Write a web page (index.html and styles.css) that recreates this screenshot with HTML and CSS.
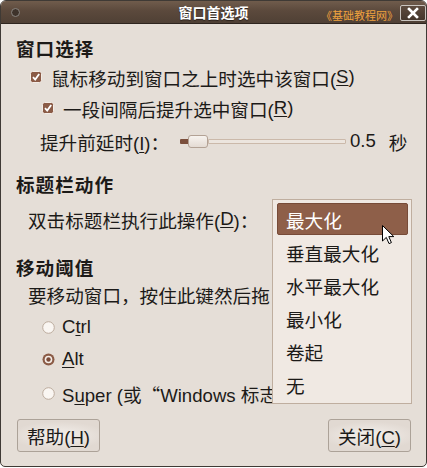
FILE: index.html
```html
<!DOCTYPE html>
<html lang="zh-CN">
    <head>
        <meta charset="UTF-8">
        <title>窗口首选项</title>
        <link rel="stylesheet" href="styles.css">
    </head>
    <body>
        <div class="window">
            <div class="titlebar">
                <div class="tb-left"><span class="menu-dot"></span></div>
                <div class="title">窗口首选项</div>
                <div class="tb-right">
                    <span class="brand">《基础教程网》</span>
                    <span class="close">
                        <svg viewBox="0 0 12 12" width="12" height="12">
                            <path d="M2 2 L10 10 M10 2 L2 10" stroke="#fff" stroke-width="2.6" stroke-linecap="square"></path>
                        </svg>
                    </span>
                </div>
            </div>

            <div class="content">
                <div class="heading heading-first">窗口选择</div>
                <label class="row check-row row-s1">
                    <span class="check"><svg viewBox="0 0 12 12"><rect x="0.5" y="0.5" width="11" height="11" rx="2" fill="#8b5b46" stroke="#f3ece6"></rect><path d="M3 6.2 L5.2 8.6 L9.2 3" fill="none" stroke="#fff" stroke-width="1.8"></path></svg></span>
                    鼠标移动到窗口之上时选中该窗口(<u>S</u>)
                </label>
                <label class="row check-row check-sub row-s2">
                    <span class="check"><svg viewBox="0 0 12 12"><rect x="0.5" y="0.5" width="11" height="11" rx="2" fill="#8b5b46" stroke="#f3ece6"></rect><path d="M3 6.2 L5.2 8.6 L9.2 3" fill="none" stroke="#fff" stroke-width="1.8"></path></svg></span>
                    一段间隔后提升选中窗口(<u>R</u>)
                </label>
                <div class="row slider-row row-s3">
                    <span class="slider-label">提升前延时(<u>I</u>)：</span>
                    <div class="slider">
                        <span class="slider-fill"></span>
                        <span class="slider-thumb"></span>
                        <span class="slider-rest"></span>
                    </div>
                    <span class="slider-value">0.5</span>
                    <span class="slider-unit">秒</span>
                </div>

                <div class="heading heading-2">标题栏动作</div>
                <div class="row plain-row row-combo">双击标题栏执行此操作(<u>D</u>)：</div>

                <div class="heading heading-3">移动阈值</div>
                <div class="row plain-row"><span class="clip clip-plain">要移动窗口，按住此键然后拖</span></div>
                <label class="row radio-row row-r1">
                    <span class="radio"><svg viewBox="0 0 13 13"><circle cx="6.5" cy="6.5" r="5.8" fill="#faf6f2" stroke="#bcac9e"></circle></svg></span>
                    C<u>t</u>rl
                </label>
                <label class="row radio-row row-r2">
                    <span class="radio"><svg viewBox="0 0 13 13"><circle cx="6.5" cy="6.5" r="6" fill="#8b5b46"></circle><circle cx="6.5" cy="6.5" r="3.8" fill="#f6efe9"></circle><circle cx="6.5" cy="6.5" r="2.2" fill="#7a4b38"></circle></svg></span>
                    <u>A</u>lt
                </label>
                <label class="row radio-row row-r3">
                    <span class="radio"><svg viewBox="0 0 13 13"><circle cx="6.5" cy="6.5" r="5.8" fill="#faf6f2" stroke="#bcac9e"></circle></svg></span>
                    <span class="clip clip-super">S<u>u</u>per (或<span class="cjk">“</span>Windows 标志</span>
                </label>

                <div class="buttons">
                    <button class="btn">帮助(<u>H</u>)</button>
                    <button class="btn">关闭(<u>C</u>)</button>
                </div>
            </div>

            <ul class="popup">
                <li class="selected">最大化</li>
                <li>垂直最大化</li>
                <li>水平最大化</li>
                <li>最小化</li>
                <li>卷起</li>
                <li>无</li>
            </ul>

            <svg class="cursor" viewBox="0 0 13 20" width="13" height="20">
                <path d="M0.5 0.5 L0.5 16 L4.3 12.4 L7 18.6 L9.4 17.6 L6.8 11.6 L11.8 11.6 Z" fill="#fff" stroke="#000" stroke-width="1"></path>
            </svg>
        </div>
    </body>
</html>
```

FILE: styles.css
```css
* {
    padding: 0;
    margin: 0;
    box-sizing: border-box
}

body {
    background: #fff;
    font-family: "Liberation Sans", "Noto Sans CJK SC", sans-serif;
    font-size: 18.6px;
    color: #1c1a18
}

u {
    text-decoration-thickness: 1px;
    text-underline-offset: 2px
}

.cjk {
    font-family: "Noto Sans CJK SC", sans-serif
}

.window {
    position: relative;
    width: 427px;
    height: 467px;
    background: #e5ded7;
    border: 1px solid #3f3a35;
    border-radius: 6px 6px 5px 5px;
    overflow: hidden
}

.titlebar {
    height: 23px;
    display: grid;
    grid-template-columns: 1fr auto 1fr;
    align-items: center;
    background: linear-gradient(#705c4c, #5b493c 45%, #4f4035);
    border-bottom: 1px solid #2e251f
}

.tb-left {
    display: flex;
    padding-left: 10px
}

.menu-dot {
    width: 9px;
    height: 9px;
    border-radius: 50%;
    border: 1px solid #8a8580;
    background: #3e332b
}

.title {
    color: #fff;
    font-weight: 700;
    font-size: 14px;
    text-shadow: 0 1px 1px #2a211b
}

.tb-right {
    display: flex;
    justify-content: flex-end;
    align-items: center;
    gap: 2px
}

.brand {
    color: #f0a23e;
    font-size: 11px;
    margin-top: 5px
}

.close {
    width: 26px;
    height: 16px;
    display: flex;
    justify-content: center;
    align-items: center;
    border: 1px solid #c9c4bf;
    border-radius: 2px;
    background: linear-gradient(#5d4b3e, #45372d);
    margin-top: 2px
}

.content {
    padding: 0 15px
}

.heading {
    height: 26px;
    display: flex;
    align-items: center;
    font-weight: 700;
    letter-spacing: 1px
}

.heading-first {
    margin-top: 10px
}

.heading-2 {
    margin-top: 14px
}

.heading-3 {
    margin-top: 19px
}

.row {
    height: 30px;
    display: flex;
    align-items: center;
    white-space: nowrap
}

.row-s1 {
    margin-top: 2px
}

.row-s2 {
    margin-top: 1px
}

.row-s3 {
    margin-top: 3px
}

.row-combo {
    margin-top: 8px
}

.row-r1 {
    margin-top: 3px
}

.row-r2 {
    margin-top: 2px
}

.row-r3 {
    margin-top: 4px
}

.clip {
    overflow: hidden;
    white-space: nowrap
}

.clip-plain {
    max-width: 244px
}

.clip-super {
    max-width: 210px
}

.check-row {
    padding-left: 14px
}

.check-sub {
    padding-left: 26px
}

.check {
    width: 12px;
    height: 12px;
    margin-right: 9px;
    display: flex
}

.check svg,
.radio svg {
    width: 100%;
    height: 100%
}

.slider-row {
    padding-left: 24px
}

.slider-label {
    width: 140px
}

.slider {
    width: 166px;
    display: flex;
    align-items: center
}

.slider-fill {
    width: 8px;
    height: 5px;
    background: #7b4f3c;
    border-radius: 1px 0 0 1px
}

.slider-thumb {
    width: 20px;
    height: 13px;
    border: 1px solid #b3a295;
    border-radius: 3px;
    background: linear-gradient(#f7f3ef, #e4dbd3)
}

.slider-rest {
    flex: 1;
    height: 5px;
    border: 1px solid #cbb9aa;
    background: #ece5de;
    border-radius: 0 1px 1px 0
}

.slider-value {
    margin-left: 4px
}

.slider-unit {
    margin-left: 13px
}

.plain-row {
    padding-left: 12px
}

.radio-row {
    padding-left: 26px
}

.radio {
    width: 13px;
    height: 13px;
    margin-right: 7px;
    display: flex
}

.buttons {
    margin-top: 11px;
    display: flex;
    justify-content: space-between;
    padding-left: 1px
}

.btn {
    width: 83px;
    height: 33px;
    font: inherit;
    color: inherit;
    border: 1px solid #aca298;
    border-radius: 3px;
    background: radial-gradient(ellipse 60% 45% at 50% 50%, #f4f0ec, #e1d9d2 100%)
}

.popup {
    position: absolute;
    left: 271px;
    top: 198px;
    width: 140px;
    height: 205px;
    list-style: none;
    background: #f0e9e3;
    border: 1px solid #bfae9f;
    padding: 3px 3px 2px 4px
}

.popup li {
    height: 33px;
    display: flex;
    align-items: center;
    padding-left: 8px;
    border: 1px solid transparent;
    border-radius: 2px
}

.popup li.selected {
    height: 32px;
    margin-bottom: 1px;
    background: #8e5f49;
    border-color: #774b38;
    color: #fff
}

.cursor {
    position: absolute;
    left: 381px;
    top: 224px
}
```
